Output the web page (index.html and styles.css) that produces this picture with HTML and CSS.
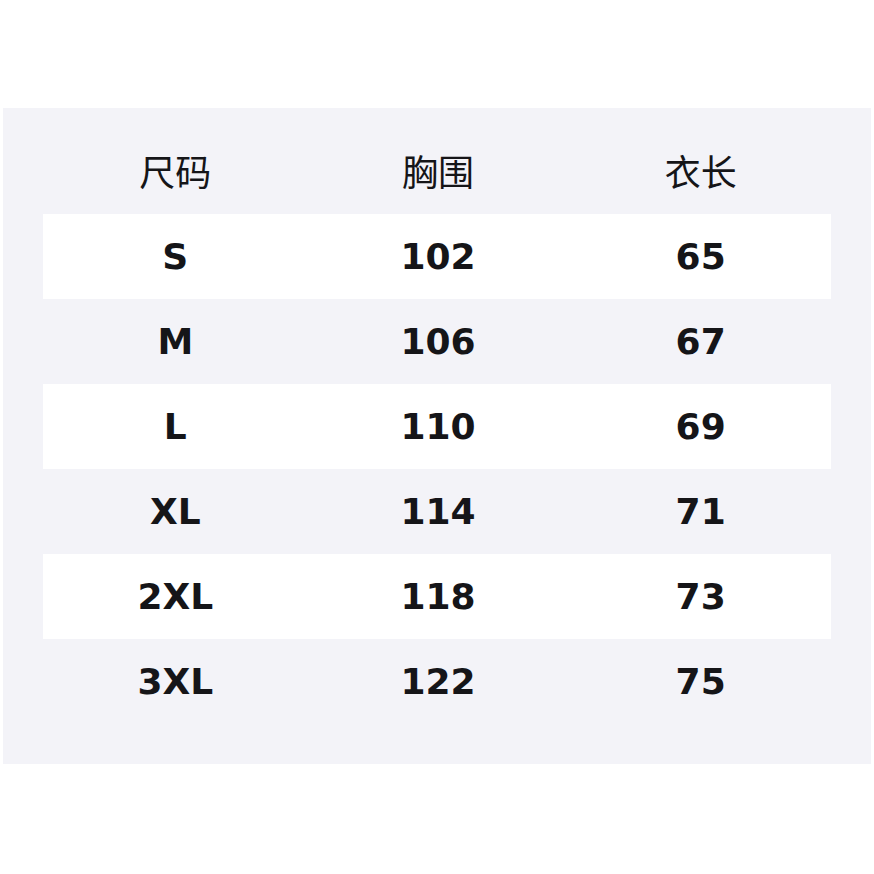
FILE: index.html
```html
<!DOCTYPE html>
<html lang="zh">
<head>
<meta charset="utf-8">
<link rel="stylesheet" href="styles.css">
</head>
<body>
<div class="panel">
  <div class="row head"><div>尺码</div><div>胸围</div><div>衣长</div></div>
  <div class="row alt"><div>S</div><div>102</div><div>65</div></div>
  <div class="row"><div>M</div><div>106</div><div>67</div></div>
  <div class="row alt"><div>L</div><div>110</div><div>69</div></div>
  <div class="row"><div>XL</div><div>114</div><div>71</div></div>
  <div class="row alt"><div>2XL</div><div>118</div><div>73</div></div>
  <div class="row"><div>3XL</div><div>122</div><div>75</div></div>
</div>
</body>
</html>
```
FILE: styles.css
```css
html, body { margin: 0; padding: 0; background: #fff; }
body { width: 874px; height: 874px; padding-top: 108px; box-sizing: border-box; }
.panel {
  margin: 0 3px;
  height: 656px;
  box-sizing: border-box;
  background: #f3f3f8;
  padding: 22px 40px 40px;
  font-family: "DejaVu Sans", "Noto Sans CJK SC", sans-serif;
  color: #151518;
}
.row {
  display: grid;
  grid-template-columns: 1fr 1fr 1fr;
  height: 85px;
  align-items: center;
  text-align: center;
  font-weight: bold;
  font-size: 36px;
}
.row > div { padding-left: 2px; }
.row.alt { background: #fff; }
.row.head {
  font-weight: normal;
  font-size: 36px;
  height: 84px;
  padding-bottom: 4px;
  box-sizing: border-box;
  font-family: "Noto Sans CJK SC", sans-serif;
}
```
